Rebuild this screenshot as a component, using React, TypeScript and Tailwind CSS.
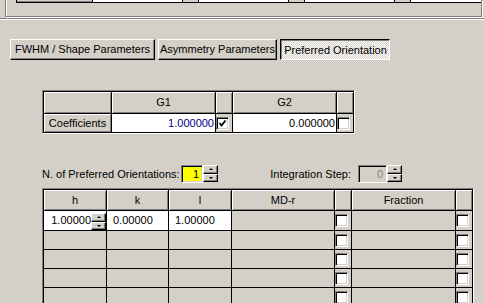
import React from "react";

// classic win95-ish dialog bits
const raised = "border border-t-white border-l-white border-r-black border-b-black shadow-[inset_-1px_-1px_#808080]";
const sunken = "border border-t-[#808080] border-l-[#808080] border-r-white border-b-white shadow-[inset_1px_1px_#000,inset_-1px_-1px_#d4d0c8]";
const fixedCell = "bg-[#d4d0c8] shadow-[inset_1px_1px_#fff,inset_-1px_-1px_#808080] flex items-center justify-center";

function Check({ checked }: { checked?: boolean }) {
  return (
    <div className={"w-[13px] h-[13px] bg-white flex items-center justify-center " + sunken}>
      {checked && (
        <svg width="9" height="9" viewBox="0 0 9 9">
          <polyline points="1.5,4 3.5,6.5 7.5,1.5" fill="none" stroke="#000" strokeWidth="1.8" />
        </svg>
      )}
    </div>
  );
}

function Spin({ className = "" }: { className?: string }) {
  return (
    <div className={"flex flex-col " + className}>
      <div className={"flex-1 flex items-center justify-center bg-[#d4d0c8] " + raised}>
        <div className="w-0 h-0 border-x-[2px] border-x-transparent border-b-[2px] border-b-black" />
      </div>
      <div className={"flex-1 flex items-center justify-center bg-[#d4d0c8] " + raised}>
        <div className="w-0 h-0 border-x-[2px] border-x-transparent border-t-[2px] border-t-black" />
      </div>
    </div>
  );
}

const Blank = () => <div className="bg-[#d4d0c8]" />;
const ChkCell = ({ checked }: { checked?: boolean }) => (
  <div className="bg-[#d4d0c8] flex items-center">
    <Check checked={checked} />
  </div>
);

export default function App() {
  const tabs = [
    { label: "FWHM / Shape Parameters", w: "w-[145px]" },
    { label: "Asymmetry Parameters", w: "w-[119px]" },
  ];

  return (
    <div className="w-[484px] h-[303px] overflow-hidden bg-[#d4d0c8] font-['Liberation_Sans',Arial,sans-serif] text-[11px] text-black">
      {/* tail of the group box above */}
      <div className="ml-[5px] mr-[2px] h-[17px] border-l border-r border-b border-[#808080] shadow-[inset_1px_0_#fff,1px_1px_#fff]">
        <div className="ml-[10px] flex h-[3px] border-l border-b border-black">
          <div className="w-[75px] bg-[#d4d0c8] border-b border-[#808080]" />
          <div className="w-[90px] bg-white border-l border-black" />
          <div className="w-[16px] bg-[#d4d0c8] border-l border-black" />
          <div className="w-[90px] bg-white border-l border-black" />
          <div className="w-[16px] bg-[#d4d0c8] border-l border-black" />
          <div className="w-[90px] bg-white border-l border-black" />
          <div className="w-[16px] bg-[#d4d0c8] border-l border-black" />
          <div className="flex-1 bg-white border-l border-black" />
        </div>
      </div>
      <div className="mt-px h-[2px] border-t border-[#808080] border-b border-b-white" />

      {/* page buttons */}
      <div className="mt-[19px] ml-[10px] flex gap-[3px] h-[21px]">
        {tabs.map((t) => (
          <div key={t.label} className={"flex items-center justify-center bg-[#d4d0c8] " + raised + " " + t.w}>
            {t.label}
          </div>
        ))}
        <div className="w-[110px] flex items-center justify-center pt-px pl-px border border-t-black border-l-black border-r-white border-b-white shadow-[inset_1px_1px_#808080] bg-[repeating-conic-gradient(#fff_0_25%,#d4d0c8_0_50%)] bg-[length:2px_2px]">
          Preferred Orientation
        </div>
      </div>

      {/* coefficients grid */}
      <div className="mt-[30px] ml-[42px] w-fit border border-t-[#808080] border-l-[#808080] border-r-white border-b-white">
        <div className="grid grid-cols-[67px_103px_16px_103px_16px] grid-rows-[21px_18px] gap-px p-px bg-black">
          <div className={fixedCell} />
          <div className={fixedCell}>G1</div>
          <div className={fixedCell} />
          <div className={fixedCell}>G2</div>
          <div className={fixedCell} />
          <div className={fixedCell}>Coefficients</div>
          <div className="bg-white flex items-center justify-end pr-px text-[#00008b]">1.000000</div>
          <ChkCell checked />
          <div className="bg-white flex items-center justify-end pr-px">0.000000</div>
          <ChkCell />
        </div>
      </div>

      {/* counts */}
      <div className="mt-[31px] ml-[42px] flex h-[18px] items-stretch">
        <div className="w-[139px] flex items-center">N. of Preferred Orientations:</div>
        <div className={"w-[22px] bg-[#ffff00] flex items-center justify-end pr-[3px] " + sunken}>1</div>
        <Spin className="w-[15px] h-[17px]" />
        <div className="w-[140px] flex items-center justify-end pr-[7px]">Integration Step:</div>
        <div className={"w-[29px] flex items-center justify-end pr-[3px] text-[#808080] " + sunken}>0</div>
        <Spin className="w-[15px] h-[17px]" />
      </div>

      {/* orientations grid */}
      <div className="mt-[5px] ml-[42px] w-fit border-t border-l border-r border-t-[#808080] border-l-[#808080] border-r-white">
        <div className="grid grid-cols-[62px_61px_62px_102px_16px_103px_16px] grid-rows-[20px_19px_18px_18px_18px_18px] gap-px p-px bg-black">
          <div className={fixedCell}>h</div>
          <div className={fixedCell}>k</div>
          <div className={fixedCell}>l</div>
          <div className={fixedCell}>MD-r</div>
          <div className={fixedCell} />
          <div className={fixedCell}>Fraction</div>
          <div className={fixedCell} />

          <div className="bg-white flex items-stretch">
            <div className="flex-1 flex items-center justify-end">1.00000</div>
            <Spin className="w-[15px] mt-[2px] mb-0" />
          </div>
          <div className="bg-white flex items-center pl-[6px]">0.00000</div>
          <div className="bg-white flex items-center pl-[6px]">1.00000</div>
          <Blank />
          <ChkCell />
          <Blank />
          <ChkCell />

          {[0, 1, 2, 3].map((r) => (
            <React.Fragment key={r}>
              <Blank />
              <Blank />
              <Blank />
              <Blank />
              <ChkCell />
              <Blank />
              <ChkCell />
            </React.Fragment>
          ))}
        </div>
      </div>
    </div>
  );
}
